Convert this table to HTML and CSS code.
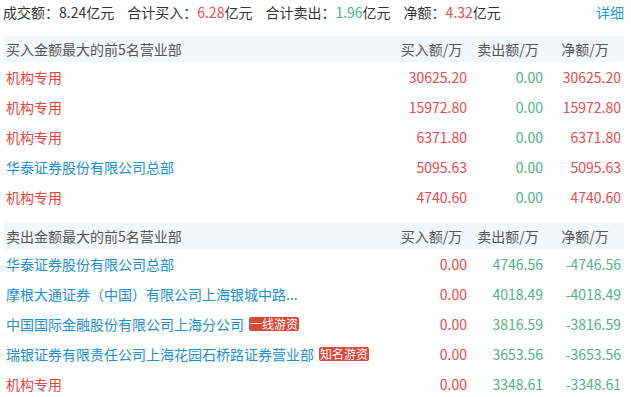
FILE: index.html
```html
<!DOCTYPE html>
<html lang="zh-CN">
<head>
<meta charset="utf-8">
<title>龙虎榜</title>
<link rel="stylesheet" href="styles.css">
</head>
<body>
<div class="wrap">
  <div class="summary">
    <span class="item">成交额：8.24亿元</span>
    <span class="item">合计买入：<span class="up">6.28</span>亿元</span>
    <span class="item">合计卖出：<span class="down">1.96</span>亿元</span>
    <span class="item">净额：<span class="up">4.32</span>亿元</span>
    <a class="detail">详细</a>
  </div>

  <table class="board">
    <colgroup><col><col class="c-buy"><col class="c-sell"><col class="c-net"></colgroup>
    <thead>
      <tr><th class="name">买入金额最大的前5名营业部</th><th>买入额/万</th><th>卖出额/万</th><th>净额/万</th></tr>
    </thead>
    <tbody>
      <tr><td class="name org">机构专用</td><td class="up">30625.20</td><td class="down">0.00</td><td class="up">30625.20</td></tr>
      <tr><td class="name org">机构专用</td><td class="up">15972.80</td><td class="down">0.00</td><td class="up">15972.80</td></tr>
      <tr><td class="name org">机构专用</td><td class="up">6371.80</td><td class="down">0.00</td><td class="up">6371.80</td></tr>
      <tr><td class="name link">华泰证券股份有限公司总部</td><td class="up">5095.63</td><td class="down">0.00</td><td class="up">5095.63</td></tr>
      <tr><td class="name org">机构专用</td><td class="up">4740.60</td><td class="down">0.00</td><td class="up">4740.60</td></tr>
    </tbody>
  </table>

  <table class="board second">
    <colgroup><col><col class="c-buy"><col class="c-sell"><col class="c-net"></colgroup>
    <thead>
      <tr><th class="name">卖出金额最大的前5名营业部</th><th>买入额/万</th><th>卖出额/万</th><th>净额/万</th></tr>
    </thead>
    <tbody>
      <tr><td class="name link">华泰证券股份有限公司总部</td><td class="up">0.00</td><td class="down">4746.56</td><td class="down">-4746.56</td></tr>
      <tr><td class="name link">摩根大通证券（中国）有限公司上海银城中路...</td><td class="up">0.00</td><td class="down">4018.49</td><td class="down">-4018.49</td></tr>
      <tr><td class="name link">中国国际金融股份有限公司上海分公司<span class="tag">一线游资</span></td><td class="up">0.00</td><td class="down">3816.59</td><td class="down">-3816.59</td></tr>
      <tr><td class="name link">瑞银证券有限责任公司上海花园石桥路证券营业部<span class="tag">知名游资</span></td><td class="up">0.00</td><td class="down">3653.56</td><td class="down">-3653.56</td></tr>
      <tr><td class="name org">机构专用</td><td class="up">0.00</td><td class="down">3348.61</td><td class="down">-3348.61</td></tr>
    </tbody>
  </table>
</div>
</body>
</html>
```

FILE: styles.css
```css
html, body {
  margin: 0;
  padding: 0;
  background: #ffffff;
}
body {
  font-family: "Noto Sans CJK SC", "Noto Sans", sans-serif;
  font-size: 14px;
  color: #333333;
  overflow: hidden;
}
.wrap {
  width: 620px;
  padding: 0 7px 0 4px;
}
.summary {
  display: flex;
  align-items: center;
  height: 24px;
  line-height: 24px;
  margin-bottom: 12px;
  margin-left: -1px;
  white-space: nowrap;
}
.summary .item {
  margin-right: 13px;
}
.summary .detail {
  margin-left: auto;
  color: #1e9ad8;
  cursor: pointer;
}
.up { color: #ee4848; }
.down { color: #4db285; }

.board {
  width: 620px;
  border-collapse: collapse;
  table-layout: fixed;
}
.board.second {
  margin-top: 11px;
}
.c-buy { width: 77px; }
.c-sell { width: 76px; }
.c-net { width: 78px; }
.board th {
  height: 26px;
  padding: 0;
  background: #f3f6f9;
  color: #555555;
  font-weight: normal;
  text-align: center;
  white-space: nowrap;
}
.board th.name {
  text-align: left;
  padding-left: 2px;
}
.board td {
  height: 30px;
  padding: 0 3px 0 0;
  text-align: right;
  white-space: nowrap;
}
.board td.name {
  text-align: left;
  padding-left: 2px;
  overflow: hidden;
}
.org { color: #e8443e; }
.link { color: #1b8fcf; }
.tag {
  display: inline-block;
  margin-left: 5px;
  padding: 0 1px;
  height: 14px;
  line-height: 14px;
  font-size: 12px;
  color: #ffffff;
  background: #d9493a;
  border-radius: 2px;
  vertical-align: 1px;
}
```
